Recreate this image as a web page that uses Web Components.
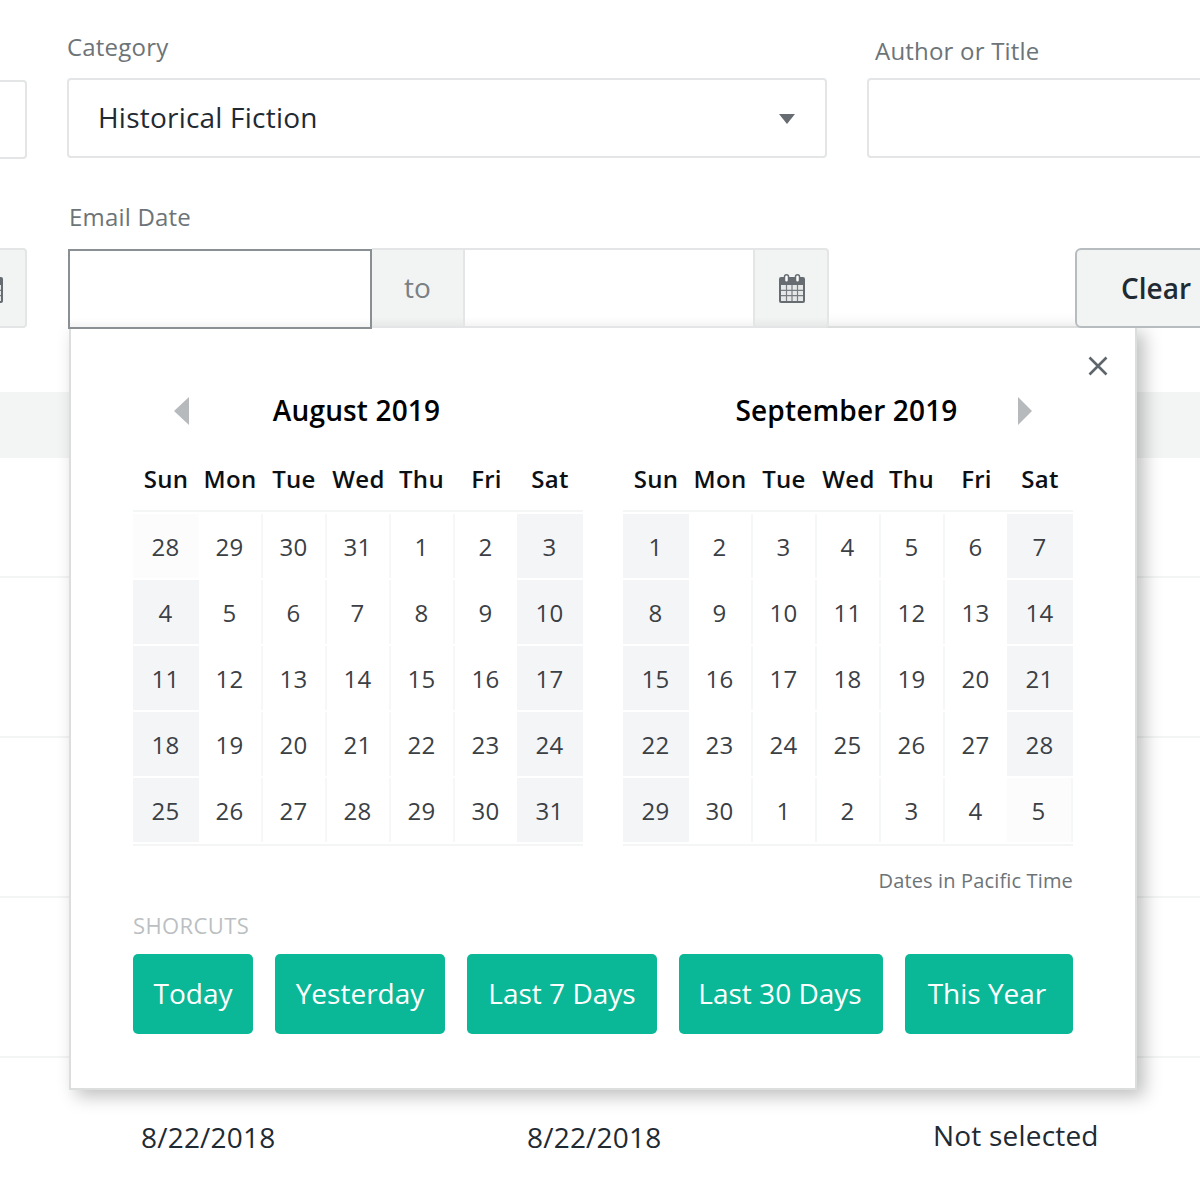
<!DOCTYPE html>
<html lang="en">
<head>
<meta charset="utf-8">
<title>Date filter</title>
<style>
html,body{margin:0;padding:0;background:#fff;}
body{font-family:"Open Sans",sans-serif;color:#1f2a33;}
</style>
</head>
<body>
<x-page>
  <x-form-row slot="form" first>
    <x-box stub style="--h:79px;--bm:-1px;"></x-box>
    <x-field label="Category" w="760"><x-select value="Historical Fiction"></x-select></x-field>
    <x-field label="Author or Title" w="430" shift="4" indent="8" style="margin-left:40px"><x-box></x-box></x-field>
  </x-form-row>
  <x-form-row slot="form">
    <x-addon stub icon></x-addon>
    <x-field label="Email Date" w="761" indent="1"><x-date-range></x-date-range></x-field>
    <x-button>Clear</x-button>
  </x-form-row>
  <x-table slot="table">
    <x-row h="120"></x-row>
    <x-row h="160"></x-row>
    <x-row h="160"></x-row>
    <x-row h="160"></x-row>
    <x-row h="160" last><span style="padding-bottom:2px">8/22/2018</span><span style="padding-bottom:2px">8/22/2018</span><span style="padding-bottom:6px">Not selected</span></x-row>
  </x-table>
  <x-popover slot="over">
    <x-calendar title="August 2019" nav="prev" start="28" prevdays="4" days="31"></x-calendar>
    <x-calendar title="September 2019" nav="next" start="1" prevdays="0" days="30"></x-calendar>
    <x-shortcut slot="shortcuts" w="120">Today</x-shortcut>
    <x-shortcut slot="shortcuts" w="170">Yesterday</x-shortcut>
    <x-shortcut slot="shortcuts" w="190">Last 7 Days</x-shortcut>
    <x-shortcut slot="shortcuts" w="204" pr="2">Last 30 Days</x-shortcut>
    <x-shortcut slot="shortcuts" w="168" pr="4">This Year</x-shortcut>
  </x-popover>
</x-page>
<script>
const CAL = `<svg width="26" height="29" viewBox="0 0 26 29" aria-hidden="true">
  <rect x="0" y="3" width="26" height="26" rx="2" fill="#666c71"/>
  <rect x="2" y="11" width="22" height="16" fill="#e6e7e8"/>
  <path d="M7.5 11v16M13 11v16M18.5 11v16M2 16.3h22M2 21.6h22" stroke="#777d81" stroke-width="1.2" fill="none"/>
  <rect x="5.5" y="0.8" width="4" height="7.4" rx="2" fill="#fff" stroke="#666c71" stroke-width="1.5"/>
  <rect x="16.5" y="0.8" width="4" height="7.4" rx="2" fill="#fff" stroke="#666c71" stroke-width="1.5"/>
</svg>`;
function def(name, css, html, init){
  customElements.define(name, class extends HTMLElement{
    constructor(){super();this.attachShadow({mode:'open'});}
    connectedCallback(){
      const h = typeof html==='function'?html(this):html;
      this.shadowRoot.innerHTML=`<style>${css}</style>${h}`;
      if(init)init(this);
    }
  });
}
def('x-page',`
  :host{display:block;position:relative;width:1200px;height:1200px;overflow:hidden;background:#fff;font-family:"Open Sans",sans-serif;}
  .form{padding-top:30px;margin-left:-200px;width:1500px;}
`,`<div class="form"><slot name="form"></slot></div><slot name="table"></slot><slot name="over"></slot>`);

def('x-form-row',`
  :host{display:flex;align-items:flex-end;margin-top:42px;}
  :host([first]){margin-top:0;}
  ::slotted(x-box[stub]){width:227px;margin-right:40px;flex:none;}
  ::slotted(x-addon[stub]){width:227px;margin-right:41px;flex:none;}
  ::slotted(x-button){margin-left:246px;}
`,`<slot></slot>`);

def('x-field',`
  :host{display:block;flex:none;position:relative;}
  label{display:block;font-size:24px;line-height:34px;letter-spacing:.2px;color:#6d7478;margin-bottom:var(--lb,14px);padding-left:var(--il,0);white-space:nowrap;}
`,el=>{
  el.style.width=el.getAttribute('w')+'px';
  const s=+(el.getAttribute('shift')||0);
  el.style.setProperty('--lb',(14-s)+'px');
  el.style.setProperty('--il',(el.getAttribute('indent')||0)+'px');
  return `<label>${el.getAttribute('label')}</label><slot></slot>`;
});

def('x-box',`
  :host{display:block;box-sizing:border-box;height:var(--h,80px);margin-bottom:var(--bm,0);border:2px solid #e3e5e6;border-radius:4px;background:#fff;}
`,`<slot></slot>`);

def('x-select',`
  :host{display:flex;align-items:center;justify-content:space-between;box-sizing:border-box;height:80px;border:2px solid #e3e5e6;border-radius:4px;background:#fff;padding:0 30px 2px 29px;font-size:28px;letter-spacing:.22px;color:#1f2a33;}
  i{width:0;height:0;border-left:8px solid transparent;border-right:8px solid transparent;border-top:10px solid #666c71;margin-top:3px;}
`,el=>`<span>${el.getAttribute('value')}</span><i></i>`);

def('x-addon',`
  :host{display:flex;align-items:center;justify-content:flex-end;box-sizing:border-box;height:80px;border:2px solid #e3e5e6;border-radius:4px;background:#f2f4f4;padding-right:22px;}
  svg{display:block;}
`,el=>el.hasAttribute('icon')?CAL:'<slot></slot>');

def('x-date-range',`
  :host{--fade:linear-gradient(to top,rgba(0,0,0,.045),rgba(0,0,0,0) 9px);display:flex;position:relative;z-index:2;box-sizing:border-box;height:80px;width:761px;font-size:28px;color:#7a8084;}
  .a{box-sizing:border-box;width:304px;height:80px;margin-top:1px;border:2px solid #8a8f93;background:var(--fade),#fff;flex:none;}
  .to{box-sizing:border-box;width:93px;background:var(--fade),#f2f4f4;border-top:2px solid #e3e5e6;border-bottom:2px solid #e3e5e6;border-right:2px solid #e3e5e6;display:flex;align-items:center;justify-content:center;flex:none;padding-bottom:2px;}
  .b{box-sizing:border-box;width:288px;background:var(--fade),#fff;border-top:2px solid #e3e5e6;border-bottom:2px solid #e3e5e6;flex:none;}
  .ic{box-sizing:border-box;flex:1;background:var(--fade),#f2f4f4;border:2px solid #e3e5e6;border-radius:0 4px 4px 0;display:flex;align-items:center;justify-content:center;padding-left:2px;}
  svg{display:block;}
`,`<div class="a"></div><div class="to">to</div><div class="b"></div><div class="ic">${CAL}</div>`);

def('x-button',`
  :host{display:flex;align-items:center;position:relative;z-index:2;box-sizing:border-box;height:80px;flex:none;border:2px solid #b7bcbf;border-radius:6px;background:#f2f4f4;padding:0 44px 1px;font-size:28px;font-weight:600;color:#1f2a33;}
`,`<slot></slot>`);

def('x-table',`
  :host{display:block;margin-top:64px;}
  .band{height:66px;background:#f3f5f5;}
`,`<div class="band"></div><slot></slot>`);

def('x-row',`
  :host{display:grid;grid-template-columns:386px 406px 1fr;align-items:center;box-sizing:border-box;border-bottom:2px solid #f3f4f4;padding-left:141px;font-size:28px;letter-spacing:.2px;color:#1f2a33;}
  :host([last]){border-bottom:0;}
`,el=>{el.style.height=el.getAttribute('h')+'px';return '<slot></slot>';});

def('x-popover',`
  :host{position:absolute;left:69px;top:326px;width:1068px;height:764px;box-sizing:border-box;z-index:1;background:#fff;border:2px solid #dcdddd;box-shadow:7px 6px 17px rgba(0,0,0,.26);padding:62px 62px 0;}
  .cals{display:flex;gap:40px;}
  .note{margin-top:18px;font-size:20px;line-height:34px;color:#6d7478;text-align:right;letter-spacing:.15px;}
  .sc{margin-top:11px;font-size:22px;line-height:32px;font-weight:500;color:#bcbfc2;letter-spacing:.4px;}
  .btns{display:flex;gap:22px;margin-top:13px;}
  .close{position:absolute;right:27px;top:28px;width:20px;height:20px;display:block;}
`,`<svg class="close" viewBox="0 0 20 20" aria-hidden="true"><path d="M1.5 1.5l17 17M18.5 1.5l-17 17" stroke="#5f666b" stroke-width="2.6" fill="none"/></svg>
<div class="cals"><slot></slot></div>
<div class="note">Dates in Pacific Time</div>
<div class="sc">SHORCUTS</div>
<div class="btns"><slot name="shortcuts"></slot></div>`);

def('x-shortcut',`
  :host{display:flex;align-items:center;justify-content:center;box-sizing:border-box;height:80px;flex:none;border-radius:5px;background:#0ab897;color:#fff;font-size:28px;white-space:nowrap;padding-bottom:2px;}
`,`<slot></slot>`,el=>{
  el.style.width=el.getAttribute('w')+'px';
  el.style.paddingRight=(el.getAttribute('pr')||0)+'px';
});

def('x-calendar',`
  :host{display:block;width:450px;flex:none;color:#000;}
  .head{display:grid;grid-template-columns:1fr auto 1fr;align-items:center;height:40px;}
  h2{margin:0 3px 0 0;font-size:28px;font-weight:600;line-height:40px;letter-spacing:.15px;color:#000;white-space:nowrap;}
  .nav{width:0;height:0;margin-top:2px;border-top:14px solid transparent;border-bottom:14px solid transparent;}
  .prev{justify-self:start;margin-left:41px;border-right:15px solid #b6babd;}
  .next{grid-column:3;justify-self:end;margin-right:41px;border-left:14px solid #b6babd;}
  .g{display:grid;grid-template-columns:66px 64px 64px 64px 64px 62px 66px;}
  .wd{grid-template-columns:66px 62px 66px 63px 63px 67px 60px;margin-top:31px;height:36px;align-items:center;}
  .wd span{text-align:center;font-size:24px;font-weight:600;line-height:36px;letter-spacing:.3px;color:#0c1014;}
  .days{margin-top:13px;border-top:2px solid #f4f5f5;border-bottom:2px solid #f4f5f5;padding:2px 0;row-gap:2px;}
  .d{box-sizing:border-box;height:64px;display:flex;align-items:center;justify-content:center;font-size:24px;letter-spacing:.3px;padding-right:1px;color:#3b4045;}
  .sep{border-right:2px solid #f6f7f7;}
  .we{background:#f4f5f7;}
  .out{background:#fcfcfc;}
  .last{border-right:2px solid #f6f7f7;}
`,el=>{
  const start=+el.getAttribute('start'),pd=+el.getAttribute('prevdays'),dim=+el.getAttribute('days');
  const cells=[];
  let n=start,out=pd>0;
  let cur=pd>0?31:dim;
  for(let i=0;i<35;i++){
    cells.push([n,out]);
    n++;
    if(n>cur){n=1;out=!out;cur=dim;}
  }
  const nav=el.getAttribute('nav');
  const days=cells.map(([v,o],i)=>{
    const c=i%7;
    const cl=['d'];
    if(c>=1&&c<=4)cl.push('sep');
    if(o&&(c===0||c===6))cl.push('out');
    else if(c===0||c===6)cl.push('we');
    if(o&&c===6)cl.push('last');
    return `<div class="${cl.join(' ')}">${v}</div>`;
  }).join('');
  const wd=['Sun','Mon','Tue','Wed','Thu','Fri','Sat'].map(w=>`<span>${w}</span>`).join('');
  return `<div class="head">${nav==='prev'?'<i class="nav prev"></i>':'<i></i>'}<h2>${el.getAttribute('title')}</h2>${nav==='next'?'<i class="nav next"></i>':'<i></i>'}</div>
  <div class="g wd">${wd}</div><div class="g days">${days}</div>`;
});
</script>
</body>
</html>
